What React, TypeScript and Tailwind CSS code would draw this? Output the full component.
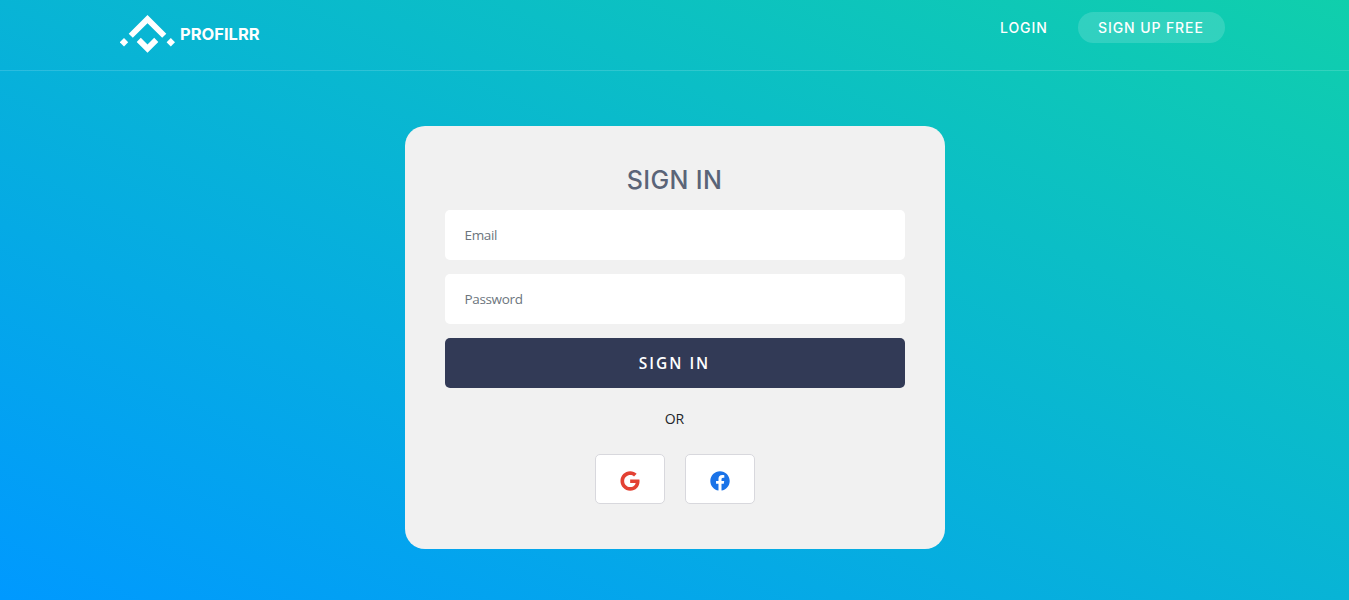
import React, { useState } from 'react';
import { FaGoogle, FaFacebook } from 'react-icons/fa';

const Logo: React.FC = () => (
  <a href="#" className="mt-[14px] flex h-10 items-center gap-[5px] text-white">
    <svg className="h-10 w-[55px]" viewBox="0 0 55 40" fill="currentColor">
      <path d="M27.5 1L46.3 19.7L42.2 23.8L27.5 9.2L12.8 23.8L8.7 19.7Z" />
      <path d="M20.8 23.8L27.5 30.5L34.2 23.8L38.3 27.9L27.5 38.7L16.7 27.9Z" />
      <path d="M4 24L8.2 28.2L4 32.4L-0.2 28.2Z" />
      <path d="M50.8 24L55 28.2L50.8 32.4L46.6 28.2Z" />
    </svg>
    <span className="text-[16.5px] font-bold leading-none">PROFILRR</span>
  </a>
);

const Header: React.FC = () => (
  <header className="h-[71px] border-b border-white/15 px-[120px]">
    <div className="flex items-start justify-between pr-1">
      <Logo />
      <nav className="mt-3 flex h-[31px] items-center text-sm font-medium tracking-[0.9px] text-white">
        <a href="#" className="w-[78px]">LOGIN</a>
        <a href="#" className="flex h-full w-[147px] items-center rounded-full bg-white/15 pl-5">
          SIGN UP FREE
        </a>
      </nav>
    </div>
  </header>
);

const inputClass =
  "h-[50px] w-full rounded-[5px] bg-white px-5 font-['Open_Sans','Noto_Sans',sans-serif] text-[13.5px] tracking-[-0.35px] text-[#212529] outline-none placeholder:text-[#6c757d]";

const socialClass =
  'flex h-[50px] w-[70px] items-center justify-center rounded-[5px] border border-[#d8d8dd] bg-white pt-1';

const SignInForm: React.FC = () => {
  const [email, setEmail] = useState('');
  const [password, setPassword] = useState('');

  return (
    <form
      onSubmit={(e) => e.preventDefault()}
      className="mx-auto mt-[55px] flex h-[423px] w-[540px] flex-col rounded-[20px] bg-[#f1f1f1] px-10 pt-[39px]"
    >
      <h1 className="text-center text-[25px] font-medium leading-[30px] tracking-[0.4px] text-[#5a6478]">
        SIGN IN
      </h1>
      <div className="mt-[15px] flex flex-col gap-[14px]">
        <input
          type="email"
          placeholder="Email"
          value={email}
          onChange={(e) => setEmail(e.target.value)}
          className={inputClass}
        />
        <input
          type="password"
          placeholder="Password"
          value={password}
          onChange={(e) => setPassword(e.target.value)}
          className={inputClass}
        />
        <button
          type="submit"
          className="h-[50px] w-full rounded-[5px] bg-[#323a56] pt-0.5 font-['Open_Sans','Noto_Sans',sans-serif] text-[15.5px] font-semibold tracking-[2px] text-white"
        >
          SIGN IN
        </button>
      </div>
      <p className="mt-[19px] text-center font-['Open_Sans','Noto_Sans',sans-serif] text-[14px] leading-6 text-[#212529]">
        OR
      </p>
      <div className="mt-[23px] flex justify-center gap-5">
        <button type="button" aria-label="Google" className={socialClass}>
          <FaGoogle size={20} color="#e34133" />
        </button>
        <button type="button" aria-label="Facebook" className={socialClass}>
          <FaFacebook size={20} color="#1a73e8" />
        </button>
      </div>
    </form>
  );
};

const App: React.FC = () => (
  <div className="h-[600px] overflow-hidden bg-[linear-gradient(to_top_right,#0099ff,#10cfac)] font-['Inter','Liberation_Sans',sans-serif]">
    <Header />
    <SignInForm />
  </div>
);

export default App;
